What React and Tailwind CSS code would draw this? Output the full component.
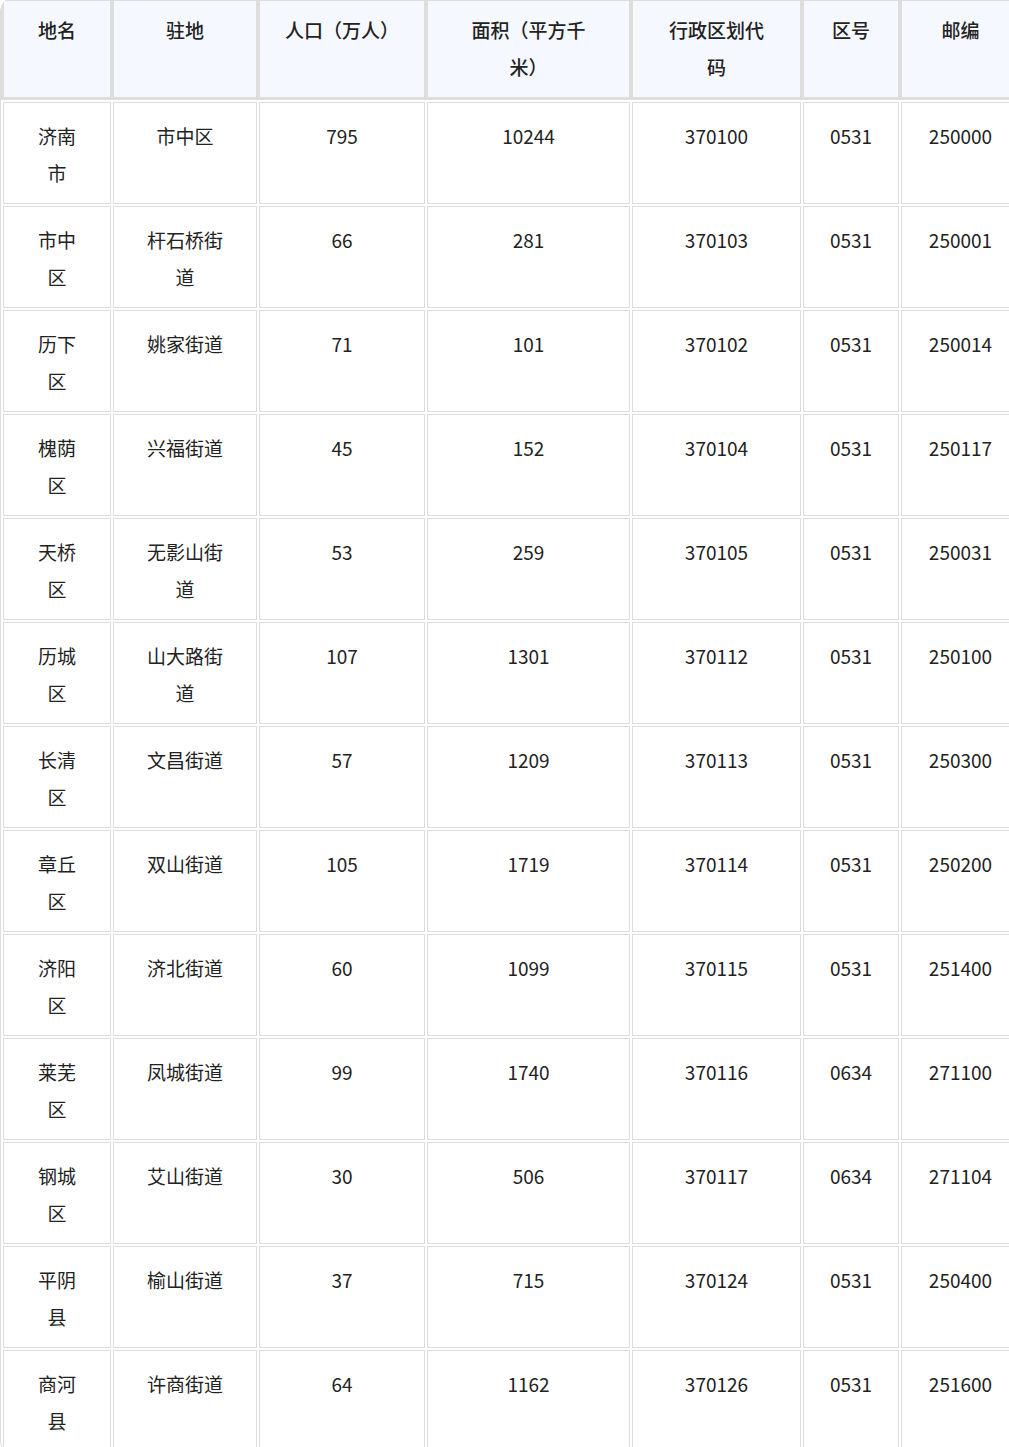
import React from 'react';

const columns = [
  { key: 'name', label: <>地名</>, width: 'w-[108px]' },
  { key: 'seat', label: <>驻地</>, width: 'w-[144px]' },
  { key: 'pop', label: <>人口（万人）</>, width: 'w-[166px]' },
  { key: 'area', label: <>面积（平方千<br />米）</>, width: 'w-[203px]' },
  { key: 'code', label: <>行政区划代<br />码</>, width: 'w-[169px]' },
  { key: 'tel', label: <>区号</>, width: 'w-[96px]' },
  { key: 'zip', label: <>邮编</>, width: 'w-[119px]' },
];

const rows = [
  [['济南', '市'], ['市中区'], '795', '10244', '370100', '0531', '250000'],
  [['市中', '区'], ['杆石桥街', '道'], '66', '281', '370103', '0531', '250001'],
  [['历下', '区'], ['姚家街道'], '71', '101', '370102', '0531', '250014'],
  [['槐荫', '区'], ['兴福街道'], '45', '152', '370104', '0531', '250117'],
  [['天桥', '区'], ['无影山街', '道'], '53', '259', '370105', '0531', '250031'],
  [['历城', '区'], ['山大路街', '道'], '107', '1301', '370112', '0531', '250100'],
  [['长清', '区'], ['文昌街道'], '57', '1209', '370113', '0531', '250300'],
  [['章丘', '区'], ['双山街道'], '105', '1719', '370114', '0531', '250200'],
  [['济阳', '区'], ['济北街道'], '60', '1099', '370115', '0531', '251400'],
  [['莱芜', '区'], ['凤城街道'], '99', '1740', '370116', '0634', '271100'],
  [['钢城', '区'], ['艾山街道'], '30', '506', '370117', '0634', '271104'],
  [['平阴', '县'], ['榆山街道'], '37', '715', '370124', '0531', '250400'],
  [['商河', '县'], ['许商街道'], '64', '1162', '370126', '0531', '251600'],
];

const lines = (parts) =>
  parts.map((p, i) => (
    <React.Fragment key={i}>
      {i > 0 && <br />}
      {p}
    </React.Fragment>
  ));

export default function App() {
  return (
    <div
      className="w-[1009px] h-[1447px] overflow-hidden bg-white text-[#222] text-[19px] leading-[36.5px]"
      style={{ fontFamily: '"Noto Sans CJK SC", "Noto Sans", sans-serif' }}
    >
      <div className="-mt-[3px] w-[1023px] border border-[#dddddd] rounded-[14px] overflow-hidden bg-white">
        <table className="table-fixed w-[1021px] border-separate border-spacing-[2px]">
          <thead>
            <tr>
              {columns.map(col => (
                <th
                  key={col.key}
                  className={`${col.width} align-top text-center font-medium bg-[#f5f8fe] border border-[#dddddd] border-b-[3px] pt-[11px] pb-[12px] px-2 whitespace-nowrap shadow-[-2px_0_0_#dddddd,2px_0_0_#dddddd,0_-2px_0_#dddddd]`}
                >
                  {col.label}
                </th>
              ))}
            </tr>
          </thead>
          <tbody>
            {rows.map((r, i) => (
              <tr key={i}>
                {r.map((cell, j) => (
                  <td
                    key={j}
                    className="h-[102px] align-top text-center border border-[#dddddd] bg-white pt-[15px] pb-[12px] px-2 whitespace-nowrap"
                  >
                    {Array.isArray(cell) ? lines(cell) : cell}
                  </td>
                ))}
              </tr>
            ))}
          </tbody>
        </table>
      </div>
    </div>
  );
}
